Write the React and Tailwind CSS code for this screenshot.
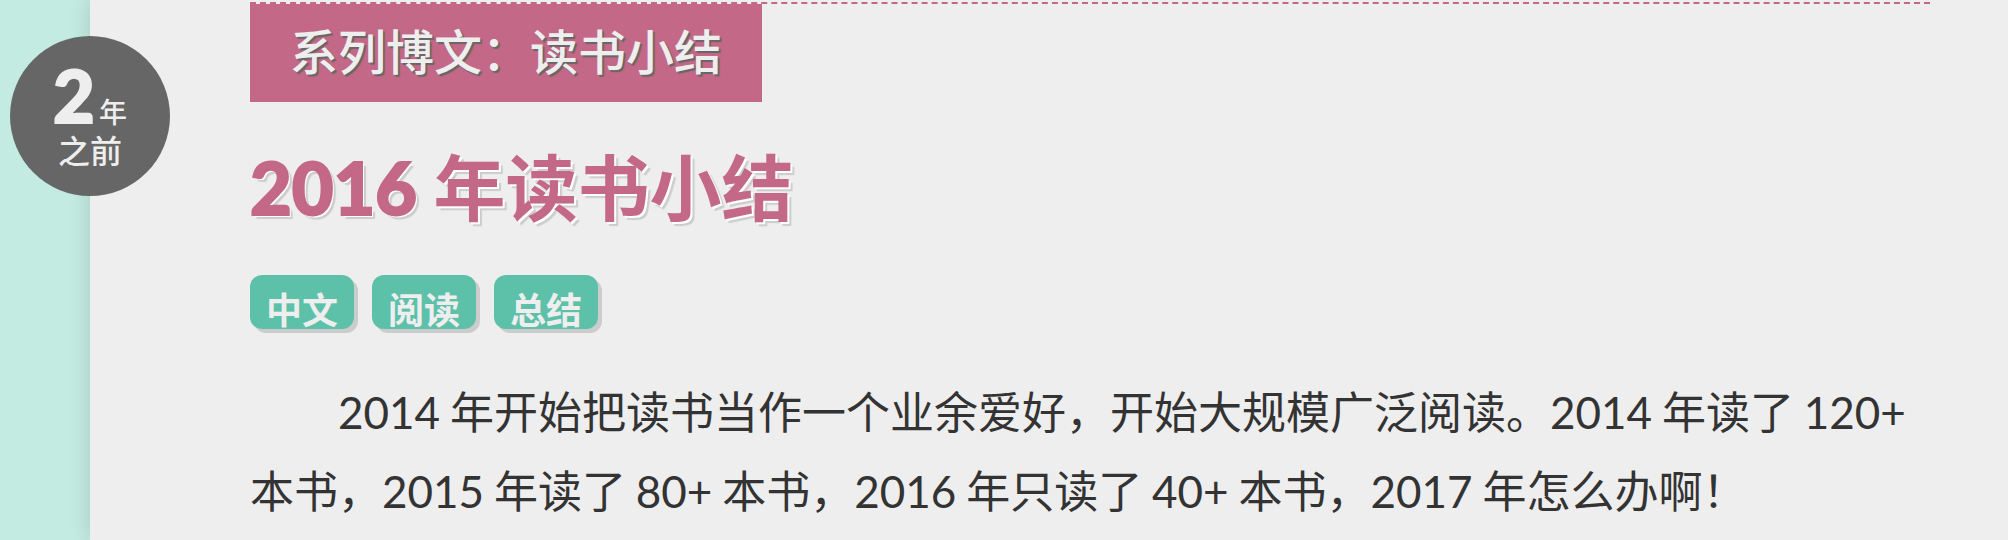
const tags = ['中文', '阅读', '总结'];

const intro =
  '2014 年开始把读书当作一个业余爱好，开始大规模广泛阅读。2014 年读了 120+ 本书，2015 年读了 80+ 本书，2016 年只读了 40+ 本书，2017 年怎么办啊！';

// Sets the numerals of a Chinese sentence in Lato.
function MixedText({ children }) {
  return children
    .split(/(\d+\+?)/)
    .map((part, i) =>
      i % 2 ? (
        <span key={i} className="font-[Lato,sans-serif] leading-none">
          {part}
        </span>
      ) : (
        part
      ),
    );
}

function AgeBadge() {
  return (
    <div className="absolute top-9 -left-20 flex size-40 flex-col items-center justify-center rounded-full bg-[#666] pt-1 text-[#eee]">
      <p className="flex items-baseline gap-1 text-[28px] leading-[46px] font-medium">
        <span className="font-[Lato,sans-serif] text-[72px] font-black [-webkit-text-stroke:2px_#eee]">2</span>
        <span>年</span>
      </p>
      <p className="text-[32px] leading-[30px] font-medium">之前</p>
    </div>
  );
}

function Tag({ label }) {
  return (
    <li>
      <a
        href="#tags"
        className="block h-[54px] rounded-xl bg-[#5dc0a9] px-4 text-4xl leading-[66px] font-bold text-[#eee] shadow-[4px_4px_0_#ccc]"
      >
        {label}
      </a>
    </li>
  );
}

export default function App() {
  return (
    <div
      lang="zh-CN"
      className="flex min-h-screen bg-[#c3ebe2] pl-[90px] font-['Noto_Sans_CJK_SC',sans-serif] text-[#333]"
    >
      <main className="relative flex-1 bg-[#eee] pt-0.5 pr-[78px] pl-40 shadow-[0_0_20px_rgba(0,0,0,0.15)]">
        <AgeBadge />
        <article className="border-t-2 border-dashed border-[#c36886]">
          <a
            href="#series"
            className="inline-block bg-[#c36886] px-10 pb-2 text-5xl leading-[90px] font-medium text-[#eee] [text-shadow:2px_2px_1px_#666]"
          >
            系列博文：读书小结
          </a>
          <h1 className="mt-8 text-7xl leading-[100px] font-bold text-[#c36886] [text-shadow:2px_2px_0_#fff,4px_4px_1px_#ccc]">
            <span className="font-[Lato,sans-serif] leading-none font-black [-webkit-text-stroke:2px_#c36886]">2016</span> 年读书小结
          </h1>
          <ul className="mt-[41px] flex gap-[18px]">
            {tags.map((tag) => (
              <Tag key={tag} label={tag} />
            ))}
          </ul>
          <p className="mt-[42px] indent-[88px] text-[44px] leading-[79px]">
            <MixedText>{intro}</MixedText>
          </p>
        </article>
      </main>
    </div>
  );
}
